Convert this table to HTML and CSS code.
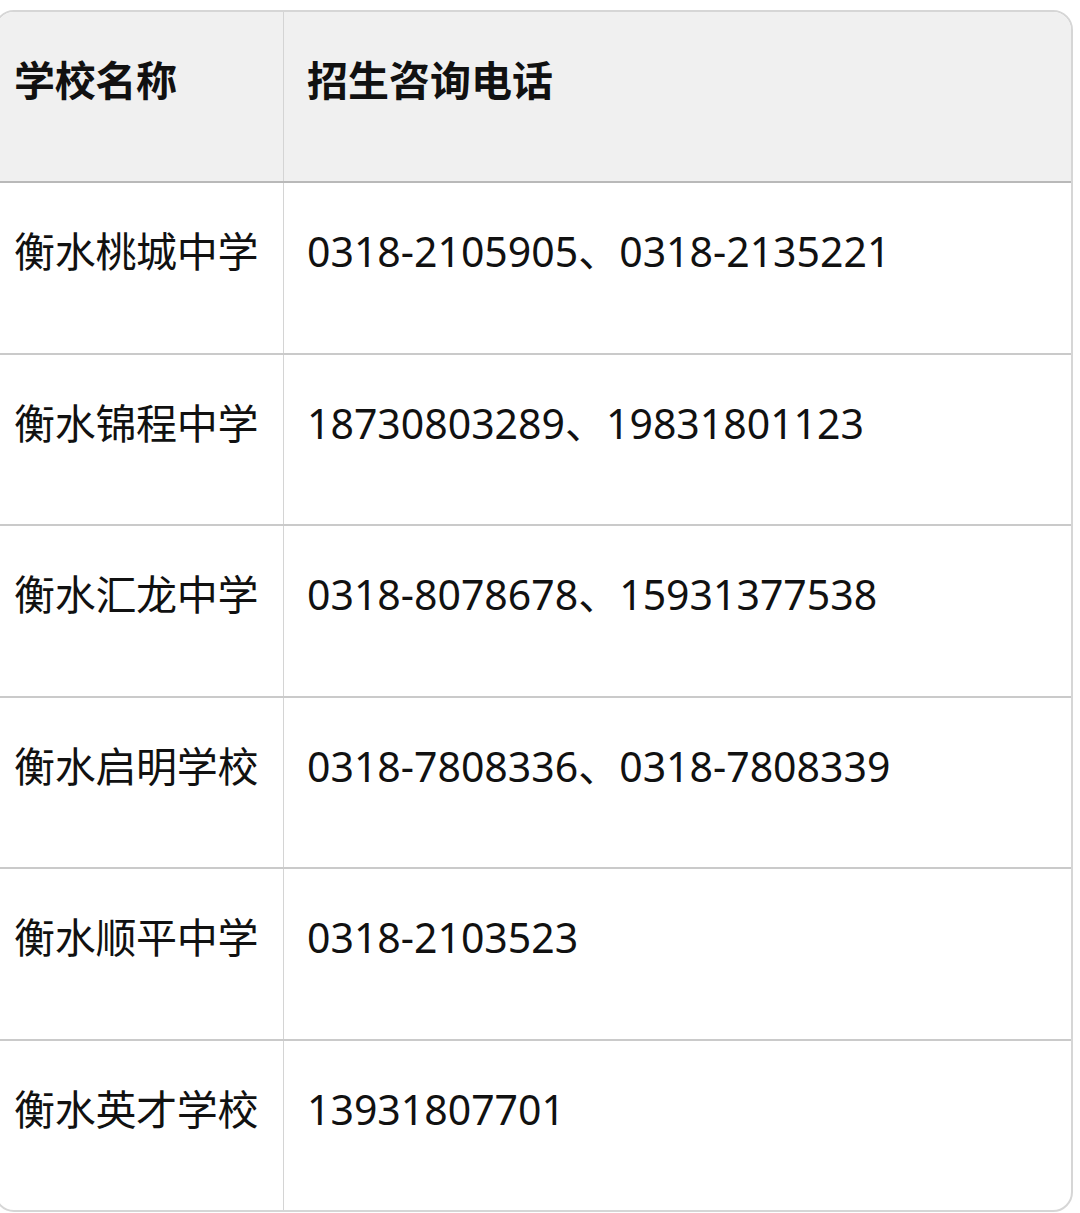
FILE: index.html
```html
<!DOCTYPE html>
<html lang="zh-CN">
<head>
<meta charset="utf-8">
<link rel="stylesheet" href="styles.css">
<title>招生咨询电话</title>
</head>
<body>
<div class="table">
  <div class="row head">
    <div class="cell name">学校名称</div>
    <div class="cell phone">招生咨询电话</div>
  </div>
  <div class="row">
    <div class="cell name">衡水桃城中学</div>
    <div class="cell phone">0318-2105905、0318-2135221</div>
  </div>
  <div class="row">
    <div class="cell name">衡水锦程中学</div>
    <div class="cell phone">18730803289、19831801123</div>
  </div>
  <div class="row">
    <div class="cell name">衡水汇龙中学</div>
    <div class="cell phone">0318-8078678、15931377538</div>
  </div>
  <div class="row">
    <div class="cell name">衡水启明学校</div>
    <div class="cell phone">0318-7808336、0318-7808339</div>
  </div>
  <div class="row">
    <div class="cell name">衡水顺平中学</div>
    <div class="cell phone">0318-2103523</div>
  </div>
  <div class="row last">
    <div class="cell name">衡水英才学校</div>
    <div class="cell phone">13931807701</div>
  </div>
</div>
</body>
</html>
```
FILE: styles.css
```css
html, body {
  margin: 0;
  padding: 0;
  background: #ffffff;
}
body {
  padding-top: 10px;
  font-family: "Noto Sans", "Noto Sans CJK SC", sans-serif;
  color: #111111;
  overflow: hidden;
}
.table {
  margin-left: -6px;
  width: 1079px;
  box-sizing: border-box;
  border: 2px solid #d6d6d6;
  border-radius: 20px;
  overflow: hidden;
}
.row {
  display: flex;
  height: 171.5px;
  box-sizing: border-box;
  border-bottom: 2px solid #cacaca;
}
.row.head {
  height: 171px;
  background: #f0f0f0;
  border-bottom-color: #b9b9b9;
  font-weight: 700;
}
.row.last {
  border-bottom: none;
  height: 169px;
}
.cell {
  font-size: 41px;
  line-height: 41px;
  padding-top: 48px;
  box-sizing: border-box;
}
.name {
  width: 288px;
  flex: none;
  padding-left: 18px;
  border-right: 1px solid #d4d4d4;
  letter-spacing: -0.3px;
}
.phone {
  flex: 1;
  padding-left: 23px;
}
```
